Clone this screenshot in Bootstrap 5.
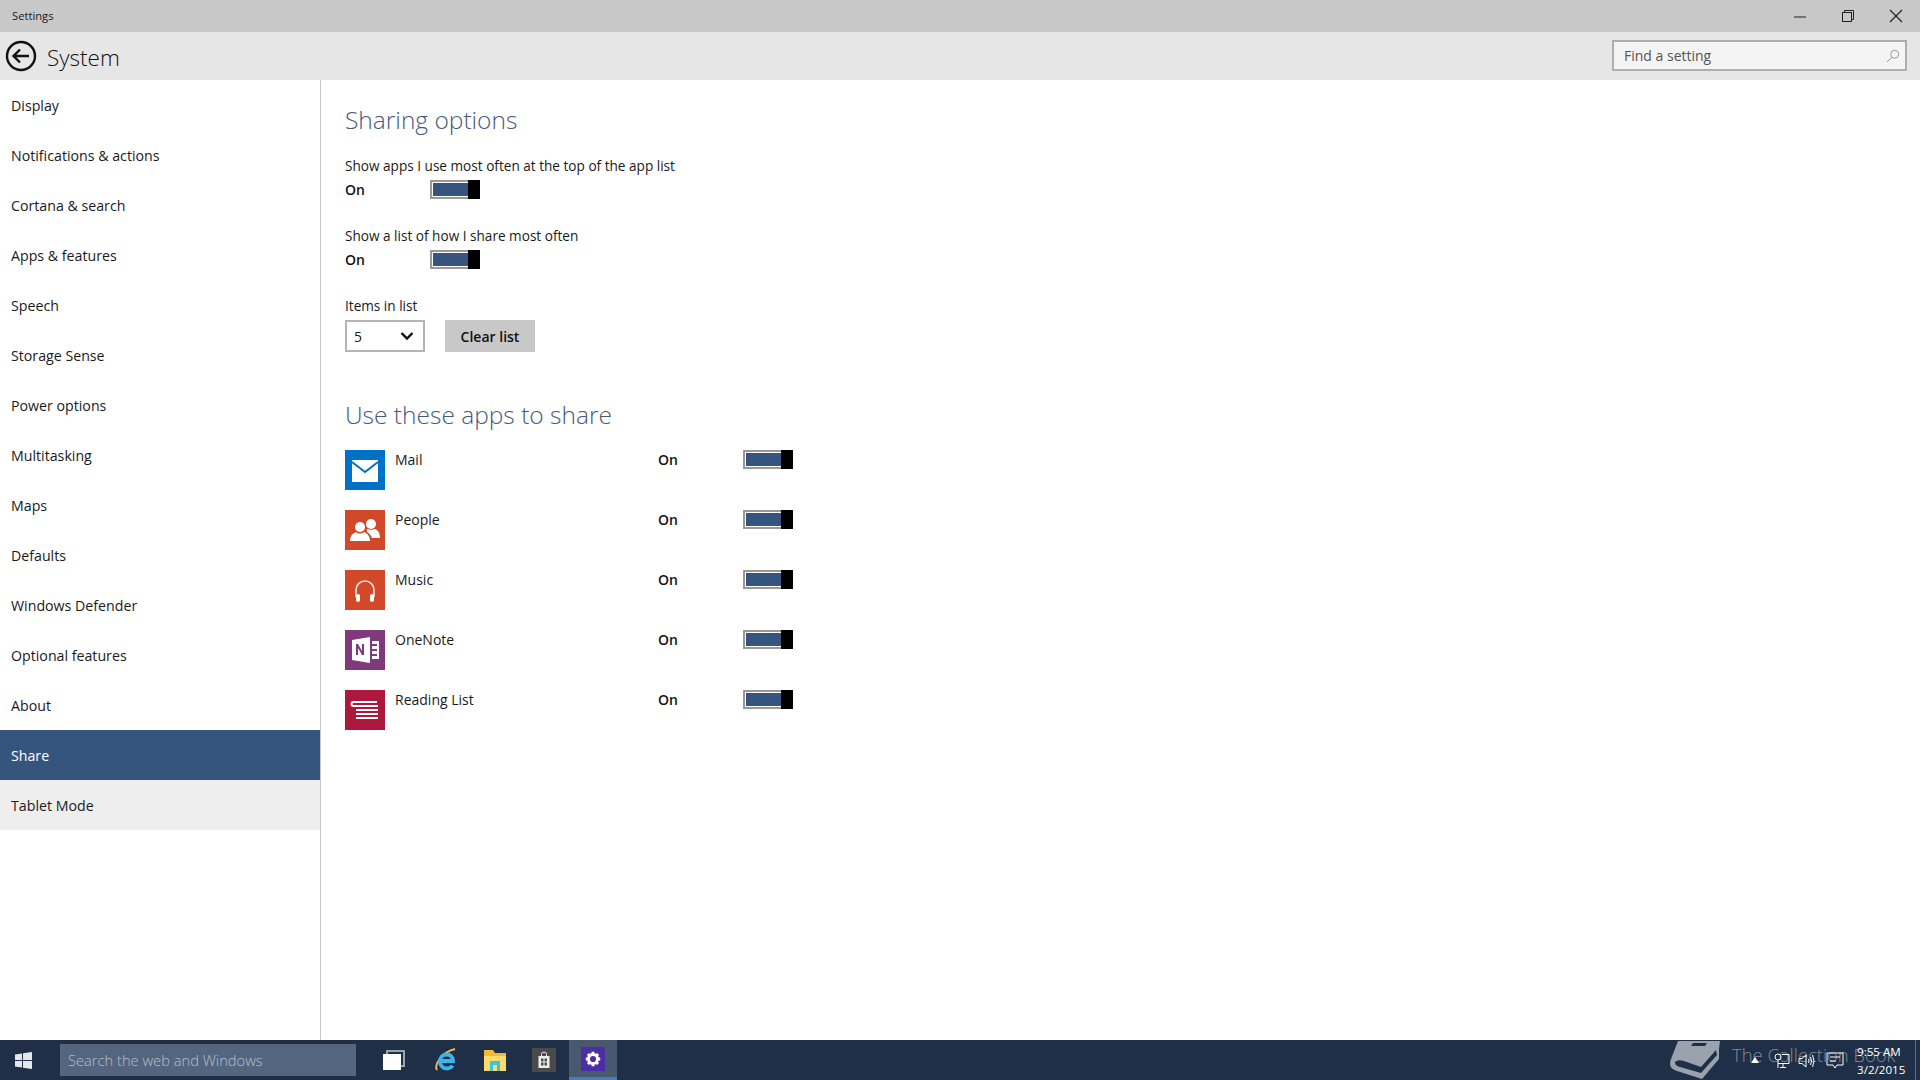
<!DOCTYPE html>
<html lang="en">
<head>
<meta charset="UTF-8">
<meta name="viewport" content="width=device-width, initial-scale=1.0">
<title>Settings</title>
<link href="https://cdn.jsdelivr.net/npm/bootstrap@5.3.0/dist/css/bootstrap.min.css" rel="stylesheet">
<style>
body { font-family: "Open Sans", "Liberation Sans", sans-serif; font-size: 14px; color: #1a1a1a; overflow: hidden; }
.title-bar { height: 32px; background: #c8c8c8; font-size: 11.2px; padding-left: 12px; }
.win-btn { width: 48px; height: 32px; }
.head-bar { height: 48px; background: #e6e6e6; padding: 0 13px 0 5px; }
.head-title { font-size: 22.5px; font-weight: 300; margin-left: 10px; margin-top: 4px; color: #111; }
.find-box { width: 295px; height: 31px; margin-bottom: 1px; border: 2px solid #aeaeae; background: #f4f4f4; padding: 0 5px 0 10px; }
.find-box span { font-size: 14px; color: #555; margin-top: -1px; }
.side-col { width: 321px; border-right: 1px solid #c8c8c8; }
.side-item { height: 50px; padding: 1px 11px 0; color: #1a1a1a; font-size: 14.2px; }
.side-item.is-active { background: #35557f; color: #fff; }
.side-item.is-hover { background: #eeeeee; }
.main-col { padding-left: 24px; }
.sec-title { font-size: 24.5px; font-weight: 300; line-height: 36px; color: #47597a; margin: 0; }
.sec-first { margin-top: 22px; }
.sec-second { margin-top: 44px; margin-bottom: 16px; line-height: 38px; }
.set-label { line-height: 20px; font-size: 13.6px; }
.set-a { margin-top: 18px; }
.set-b { margin-top: 27px; }
.tgl-row { margin-top: 4px; }
.tgl-line { height: 19px; }
.on-label { width: 85px; font-weight: 600; line-height: 20px; color: #111; }
.tgl { display: block; width: 50px; height: 19px; border: 2px solid #999; background: #35557f; box-shadow: inset 0 0 0 1px #fff; position: relative; }
.tgl::after { content: ""; position: absolute; right: -2px; top: -2px; width: 12px; height: 19px; background: #000; }
.pick-box { width: 80px; height: 32px; border: 2px solid #b4b4b4; padding: 0 9px 0 7px; }
.clear-btn { width: 90px; height: 32px; margin-left: 20px; background: #c8c8c8; border: 0; border-radius: 0; font-size: 14px; font-weight: 600; color: #111; padding: 0; }
.app-row { height: 40px; margin-bottom: 20px; }
.app-name { width: 263px; margin-left: 10px; line-height: 20px; }
.task-bar { height: 40px; background: #1f2f47; position: relative; }
.start-btn { width: 60px; padding-left: 15px; }
.task-search { width: 296px; height: 32px; background: #54667f; color: #b4bfcd; padding-left: 8px; font-size: 14.7px; font-weight: 300; }
.task-icons { margin-left: 27px; gap: 27px; }
.ie-icon { margin-left: 3px; }
.store-icon { margin-left: -1px; }
.settings-tab { width: 48px; height: 40px; background: #47586f; border-bottom: 3px solid #4a7db8; margin-left: -14px; padding-left: 12px; }
.mark-wrap { position: absolute; left: 1670px; top: 0; height: 40px; color: #7f8a99; font-size: 18.4px; font-weight: 300; gap: 12px; }
.mark-text { margin-top: -10px; }
.tray { position: absolute; left: 1748px; top: 0; height: 40px; width: 172px; color: #fff; }
.tray-time { position: absolute; left: 109px; top: 3px; font-size: 11.6px; line-height: 18px; }
.tray-end { position: absolute; left: 167px; top: 0; width: 1px; height: 40px; background: #5c6a7e; }
.tray svg { position: absolute; }
.tray-caret { left: 3px; top: 17px; }
.tray-net { left: 26px; top: 12px; }
.tray-vol { left: 50px; top: 12px; }
.tray-msg { left: 78px; top: 11px; }
</style>
</head>
<body>
<div class="d-flex flex-column vh-100">

  <div class="title-bar d-flex align-items-center justify-content-between">
    <span>Settings</span>
    <div class="d-flex">
      <div class="win-btn d-flex align-items-center justify-content-center">
        <svg width="14" height="14" viewBox="0 0 14 14"><path d="M1 8h12" stroke="#222" stroke-width="1"/></svg>
      </div>
      <div class="win-btn d-flex align-items-center justify-content-center">
        <svg width="14" height="14" viewBox="0 0 14 14" fill="none" stroke="#222"><path d="M3.5 3.5V1.500h9v9h-2"/><rect x="1.500" y="3.500" width="9" height="9"/></svg>
      </div>
      <div class="win-btn d-flex align-items-center justify-content-center">
        <svg width="14" height="14" viewBox="0 0 14 14" stroke="#222" stroke-width="1.2"><path d="M1 1l12 12M13 1L1 13"/></svg>
      </div>
    </div>
  </div>

  <div class="head-bar d-flex align-items-center justify-content-between">
    <div class="d-flex align-items-center">
      <svg width="32" height="32" viewBox="0 0 32 32" fill="none" stroke="#111"><circle cx="16" cy="16" r="14" stroke-width="2.4"/><path d="M24 16H9M15 9.500L8.500 16l6.500 6.500" stroke-width="2.4"/></svg>
      <span class="head-title">System</span>
    </div>
    <div class="find-box d-flex align-items-center justify-content-between">
      <span>Find a setting</span>
      <svg width="14" height="14" viewBox="0 0 14 14" fill="none" stroke="#999"><circle cx="8.700" cy="5.300" r="4"/><path d="M5.800 8.200L1 13"/></svg>
    </div>
  </div>

  <div class="d-flex flex-grow-1">
    <div class="side-col">
      <div class="side-item d-flex align-items-center">Display</div>
      <div class="side-item d-flex align-items-center">Notifications &amp; actions</div>
      <div class="side-item d-flex align-items-center">Cortana &amp; search</div>
      <div class="side-item d-flex align-items-center">Apps &amp; features</div>
      <div class="side-item d-flex align-items-center">Speech</div>
      <div class="side-item d-flex align-items-center">Storage Sense</div>
      <div class="side-item d-flex align-items-center">Power options</div>
      <div class="side-item d-flex align-items-center">Multitasking</div>
      <div class="side-item d-flex align-items-center">Maps</div>
      <div class="side-item d-flex align-items-center">Defaults</div>
      <div class="side-item d-flex align-items-center">Windows Defender</div>
      <div class="side-item d-flex align-items-center">Optional features</div>
      <div class="side-item d-flex align-items-center">About</div>
      <div class="side-item is-active d-flex align-items-center">Share</div>
      <div class="side-item is-hover d-flex align-items-center">Tablet Mode</div>
    </div>

    <div class="main-col flex-grow-1">
      <h2 class="sec-title sec-first">Sharing options</h2>
      <div class="set-label set-a">Show apps I use most often at the top of the app list</div>
      <div class="d-flex align-items-start tgl-row tgl-line">
        <span class="on-label">On</span><span class="tgl"></span>
      </div>
      <div class="set-label set-b">Show a list of how I share most often</div>
      <div class="d-flex align-items-start tgl-row tgl-line">
        <span class="on-label">On</span><span class="tgl"></span>
      </div>
      <div class="set-label set-b">Items in list</div>
      <div class="d-flex tgl-row">
        <div class="pick-box d-flex align-items-center justify-content-between">
          <span>5</span>
          <svg width="14" height="10" viewBox="0 0 14 10" fill="none" stroke="#111" stroke-width="2.4"><path d="M1.500 2l5.500 5.500L12.500 2"/></svg>
        </div>
        <button type="button" class="btn clear-btn">Clear list</button>
      </div>
      <h2 class="sec-title sec-second">Use these apps to share</h2>

      <div class="app-row d-flex align-items-start">
        <svg width="40" height="40" viewBox="0 0 40 40"><rect width="40" height="40" fill="#0072c6"/><path d="M7 10h26v22H7z" fill="#fff"/><path d="M7 12l13 10 13-10" fill="none" stroke="#0072c6" stroke-width="2"/></svg>
        <span class="app-name">Mail</span>
        <span class="on-label">On</span><span class="tgl"></span>
      </div>
      <div class="app-row d-flex align-items-start">
        <svg width="40" height="40" viewBox="0 0 40 40"><rect width="40" height="40" fill="#d2492a"/><g fill="#fff"><circle cx="15" cy="17" r="5"/><circle cx="26" cy="14" r="5"/><path d="M5 31c0-5 3-8 6-9 2 2 6 2 8 0 3 1 6 4 6 9z"/><path d="M22 19c2 1 6 1 8 0 3 1 5 4 5 9h-8c-1-3-3-5-5-6z"/></g></svg>
        <span class="app-name">People</span>
        <span class="on-label">On</span><span class="tgl"></span>
      </div>
      <div class="app-row d-flex align-items-start">
        <svg width="40" height="40" viewBox="0 0 40 40"><rect width="40" height="40" fill="#d2492a"/><path d="M11 27v-7a9 9 0 0 1 18 0v7" fill="none" stroke="#fde6dc" stroke-width="1.600"/><rect x="11" y="24" width="4" height="8" rx="2" fill="#fff"/><rect x="25" y="24" width="4" height="8" rx="2" fill="#fff"/></svg>
        <span class="app-name">Music</span>
        <span class="on-label">On</span><span class="tgl"></span>
      </div>
      <div class="app-row d-flex align-items-start">
        <svg width="40" height="40" viewBox="0 0 40 40"><rect width="40" height="40" fill="#80397b"/><path d="M7 10l18-3v26L7 30z" fill="#fff"/><path d="M11 25V14h2l4 7v-7h2v11h-2l-4-7v7z" fill="#80397b"/><path d="M27 11h7v18h-7v-3h5v-2h-5v-3h5v-2h-5v-3h5v-2h-5z" fill="#fff"/></svg>
        <span class="app-name">OneNote</span>
        <span class="on-label">On</span><span class="tgl"></span>
      </div>
      <div class="app-row d-flex align-items-start">
        <svg width="40" height="40" viewBox="0 0 40 40"><rect width="40" height="40" fill="#ac193d"/><g stroke="#fff" stroke-width="2" fill="none"><path d="M13 12H8.500a2 2 0 0 0 0 4H33"/><path d="M12 12h20M11 20h22M11 24h22M11 28h22"/></g></svg>
        <span class="app-name">Reading List</span>
        <span class="on-label">On</span><span class="tgl"></span>
      </div>
    </div>
  </div>

  <div class="task-bar d-flex align-items-center">
    <div class="start-btn d-flex align-items-center">
      <svg width="17" height="17" viewBox="0 0 17 17" fill="#e4e8ee"><path d="M0 2.500l7-1V8H0zM8 1.300l9-1.300V8H8zM0 9h7v6.500l-7-1zM8 9h9v8l-9-1.300z"/></svg>
    </div>
    <div class="task-search d-flex align-items-center">Search the web and Windows</div>
    <div class="task-icons d-flex align-items-center">
      <svg width="22" height="22" viewBox="0 0 22 22"><rect x="4" y="2" width="17" height="15" fill="none" stroke="#9aa4b2" stroke-width="2"/><rect x="0" y="5" width="18" height="16" fill="#fff"/></svg>
      <svg class="ie-icon" width="22" height="24" viewBox="0 0 22 24" fill="none"><path d="M2 22C-1 17 7 4 20 1" stroke="#e8c24a" stroke-width="2"/><path d="M5 13h13c0-4-2.500-6.500-6.500-6.500s-6.500 3-6.500 7 3 7 6.500 7c3 0 5-1 6-3" stroke="#3db4ec" stroke-width="3.800"/></svg>
      <svg width="22" height="24" viewBox="0 0 22 24"><path d="M0 2h9l2 3h11v4H0z" fill="#f5b93a"/><rect y="8" width="22" height="15" fill="#fbdc6a"/><rect x="6" y="13" width="10" height="10" fill="#3fc4d6"/><rect x="9" y="17" width="4" height="6" fill="#fbdc6a"/></svg>
      <svg class="store-icon" width="24" height="24" viewBox="0 0 24 24"><rect width="24" height="24" fill="#4a4a4a"/><path d="M9.500 8V6.500a2.500 2.500 0 0 1 5 0V8" fill="none" stroke="#eee"/><path d="M6.500 8h11v12h-11z" fill="#eee"/><path d="M9 10.500h2.500v3H9zM12.500 10.500H15v3h-2.500zM9 14.500h2.500v3H9zM12.500 14.500H15v3h-2.500z" fill="#4a4a4a"/></svg>
      <div class="settings-tab d-flex align-items-center">
        <svg width="24" height="24" viewBox="0 0 25 25"><rect width="25" height="25" fill="#4b2ea6"/><circle cx="12.500" cy="12.500" r="4.700" fill="none" stroke="#fff" stroke-width="3"/><g stroke="#fff" stroke-width="3"><path d="M12.500 5v3M12.500 17v3M5 12.500h3M17 12.500h3M7.200 7.200l2 2M15.800 15.800l2 2M17.800 7.200l-2 2M9.200 15.800l-2 2"/></g></svg>
      </div>
    </div>

    <div class="mark-wrap d-flex align-items-center">
      <svg width="50" height="38" viewBox="0 0 50 38"><path d="M8 0h42l-1 8v10L32 38 7 30Q0 28 0 23q0-3 1-5z" fill="#9aa3ad"/><path d="M5 21Q8 18 14 20l17 6L46 9l1 5-16 18-21-6Q5 25 5 21z" fill="#1f2f47"/><path d="M23 2h14l-2 3H21z" fill="#1f2f47"/></svg>
      <span class="mark-text">The Collection Book</span>
    </div>

    <div class="tray">
      <svg class="tray-caret" width="8" height="6" viewBox="0 0 8 6"><path d="M4 0l4 6H0z" fill="#fff"/></svg>
      <svg class="tray-net" width="16" height="18" viewBox="0 0 16 18" fill="none" stroke="#fff"><circle cx="4" cy="5" r="3"/><path d="M4 8v8M8 2.500h7v9H4M9 11.500V15M6 15.500h6"/></svg>
      <svg class="tray-vol" width="18" height="18" viewBox="0 0 18 18" fill="none" stroke="#fff"><path d="M1 6.500h3L8 3v12l-4-3.500H1zM10.500 7q1 2 0 4M12.500 5q2 4 0 8M14.500 3q3 6 0 12"/></svg>
      <svg class="tray-msg" width="18" height="20" viewBox="0 0 18 20" fill="none" stroke="#fff"><path d="M1 2h16v12h-6l-2 3-2-3H1zM4 6h10M4 10h6"/></svg>
      <div class="tray-time">9:55 AM<br>3/2/2015</div>
      <div class="tray-end"></div>
    </div>
  </div>
</div>
</body>
</html>
